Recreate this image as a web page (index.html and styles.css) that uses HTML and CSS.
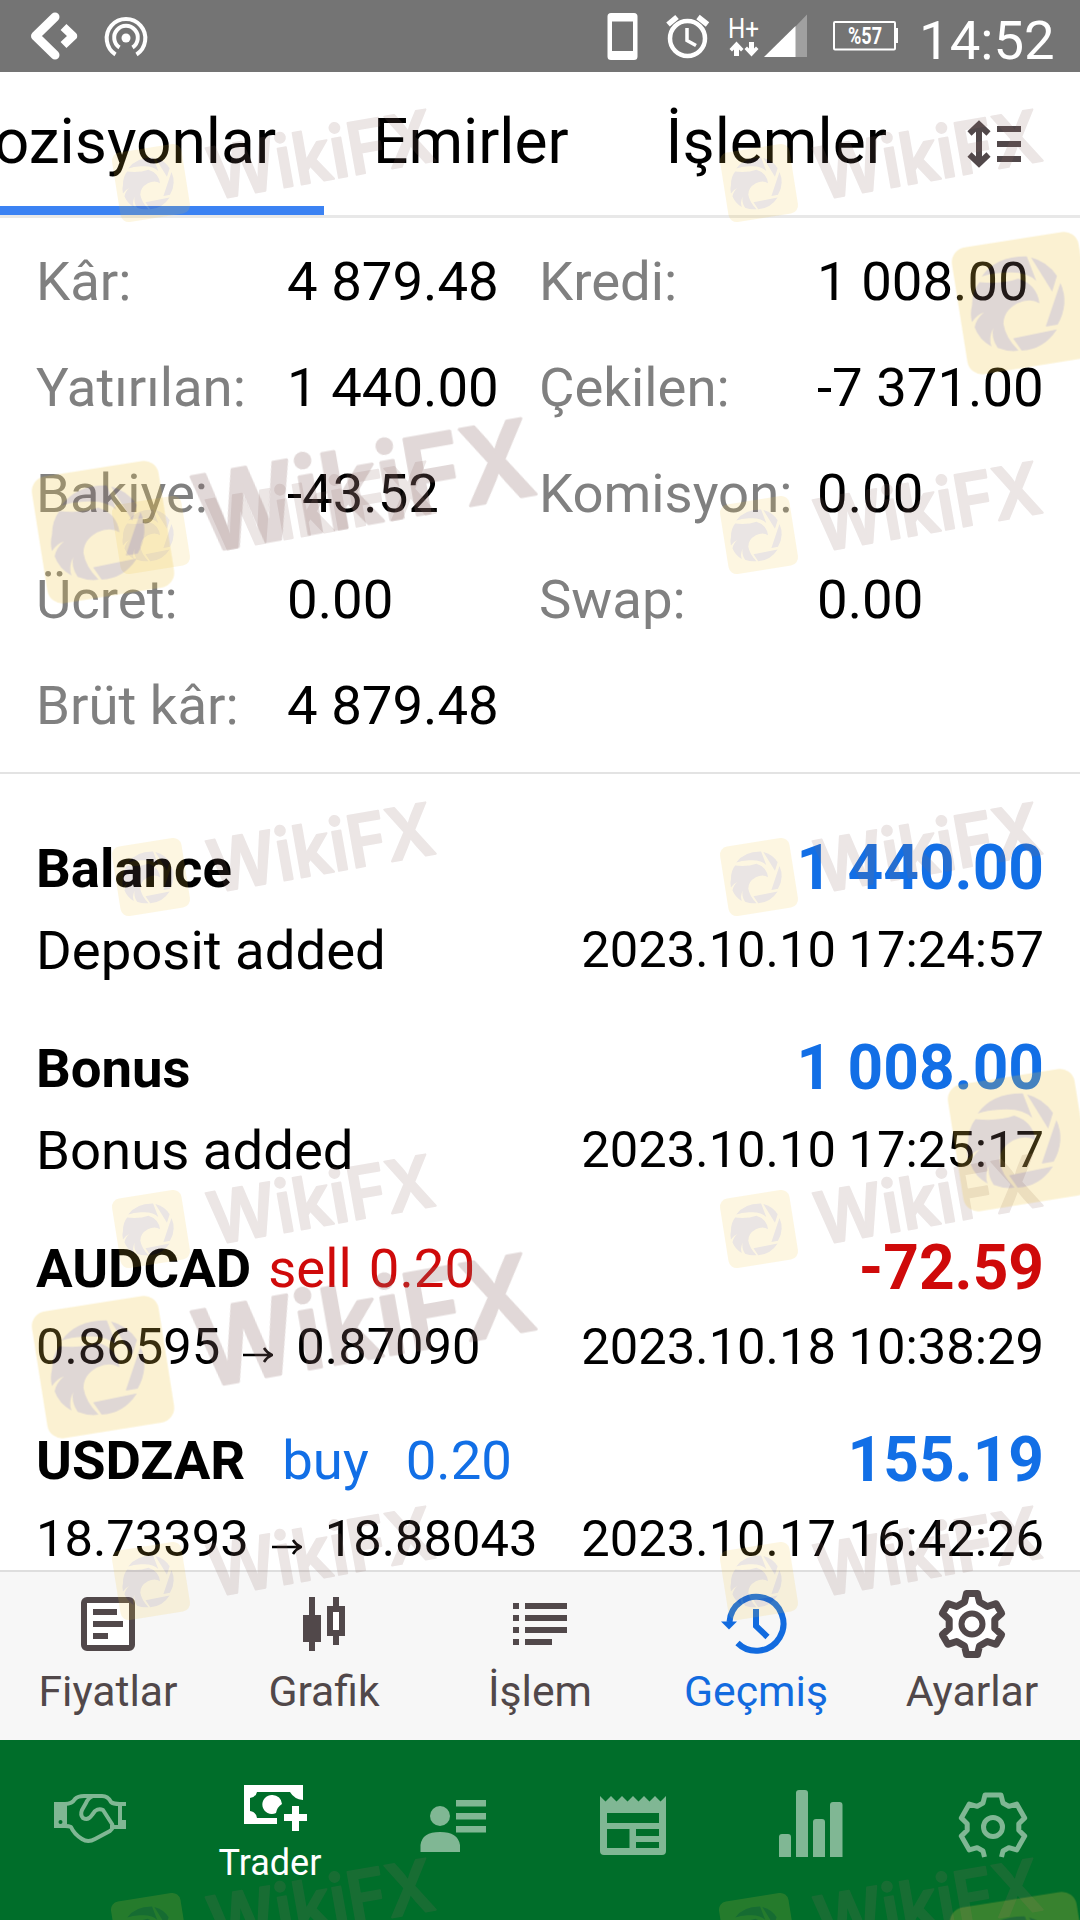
FILE: index.html
```html
<!DOCTYPE html>
<html lang="tr">
<head>
    <meta charset="UTF-8">
    <meta name="viewport" content="width=device-width, initial-scale=1.0">
    <title>Geçmiş</title>
    <link rel="stylesheet" href="styles.css">
</head>
<body>
<div class="screen">
    <header class="status-bar">
        <svg class="status-left" width="160" height="72" viewBox="0 0 160 72" fill="none" stroke="#fff">
            <path d="M55 17L35.500 36L55 55" stroke-width="9" stroke-linecap="round" stroke-linejoin="round"/>
            <path d="M63.500 27L73 36L63.500 45" stroke-width="8.500" stroke-linejoin="round"/>
            <path d="M115.500 54.500A19.300 19.300 0 1 1 136.500 54.500" stroke-width="4"/>
            <path d="M119.500 47.500A11.800 11.800 0 1 1 132.500 47.500" stroke-width="4"/>
            <circle cx="126" cy="38" r="4.500" fill="#fff" stroke="none"/>
        </svg>
        <div class="status-right">
            <svg width="220" height="72" viewBox="0 0 220 72">
                <path fill="#fff" fill-rule="evenodd" d="M11 13H34Q37.500 13 37.500 16.500V56.500Q37.500 60 34 60H11Q7.500 60 7.500 56.500V16.500Q7.500 13 11 13ZM12 21.500V51H33V21.500Z"/>
                <g fill="none" stroke="#fff">
                    <circle cx="87.500" cy="38.500" r="17.500" stroke-width="4.500"/>
                    <path d="M87 28V40.500L96 45.500" stroke-width="3.500"/>
                    <path d="M68 24.500L77 17M98 17L107.500 24.500" stroke-width="5.500"/>
                </g>
                <text x="128" y="38" class="net" textLength="31" lengthAdjust="spacingAndGlyphs">H+</text>
                <path fill="#fff" d="M136.500 41.500L143.500 49L141 51.500L139 49.500V56H134V49.500L132 51.500L129.500 49ZM151.500 56.500L144.500 49L147 46.500L149 48.500V42H154V48.500L156 46.500L158.500 49Z"/>
                <path fill="#a0a0a0" d="M195 27L207 14.500V57H195Z"/>
                <path fill="#fff" d="M164 57L195.500 26V57Z"/>
            </svg>
            <svg class="battery" width="68" height="32" viewBox="0 0 68 32">
                <rect x="2" y="2" width="61" height="27.500" rx="1" fill="none" stroke="#fff" stroke-width="2"/>
                <rect x="63" y="8" width="3" height="15" fill="#fff"/>
                <text x="16" y="24" class="percent" textLength="34" lengthAdjust="spacingAndGlyphs">%57</text>
            </svg>
            <span class="clock">14:52</span>
        </div>
    </header>

    <nav class="tabs">
        <a class="tab active">Pozisyonlar</a>
        <a class="tab">Emirler</a>
        <a class="tab">İşlemler</a>
        <svg class="sort" width="56" height="50" viewBox="0 0 56 50" stroke="#51484a" stroke-width="6" fill="none">
            <path d="M12 4V44M2.500 13.500L12 4.500L21.500 13.500M2.500 34.500L12 43.500L21.500 34.500"/>
            <path d="M30 9H54M30 24H54M30 39H54"/>
        </svg>
    </nav>

    <section class="summary">
        <span class="name">Kâr:</span><span>4 879.48</span><span class="name">Kredi:</span><span>1 008.00</span>
        <span class="name">Yatırılan:</span><span>1 440.00</span><span class="name">Çekilen:</span><span>-7 371.00</span>
        <span class="name">Bakiye:</span><span>-43.52</span><span class="name">Komisyon:</span><span>0.00</span>
        <span class="name">Ücret:</span><span>0.00</span><span class="name">Swap:</span><span>0.00</span>
        <span class="name">Brüt kâr:</span><span>4 879.48</span>
    </section>

    <main class="deals">
        <div class="deal">
            <div class="line"><b>Balance</b><b class="amount plus">1 440.00</b></div>
            <div class="line"><span>Deposit added</span><span class="date">2023.10.10 17:24:57</span></div>
        </div>
        <div class="deal">
            <div class="line"><b>Bonus</b><b class="amount plus">1 008.00</b></div>
            <div class="line"><span>Bonus added</span><span class="date">2023.10.10 17:25:17</span></div>
        </div>
        <div class="deal trade">
            <div class="line">
                <span class="symbol"><b>AUDCAD</b><span class="minus">sell</span><span class="minus">0.20</span></span>
                <b class="amount minus">-72.59</b>
            </div>
            <div class="line prices">
                <span class="route">0.86595
                    <svg width="30" height="16" viewBox="0 0 30 16"><path d="M0 8H28M21 1Q24 6 29 8Q24 10 21 15" fill="none" stroke="#000" stroke-width="2.500"/></svg>
                    0.87090</span>
                <span class="date">2023.10.18 10:38:29</span>
            </div>
        </div>
        <div class="deal trade">
            <div class="line">
                <span class="symbol wide"><b>USDZAR</b><span class="plus">buy</span><span class="plus">0.20</span></span>
                <b class="amount plus">155.19</b>
            </div>
            <div class="line prices">
                <span class="route">18.73393
                    <svg width="30" height="16" viewBox="0 0 30 16"><path d="M0 8H28M21 1Q24 6 29 8Q24 10 21 15" fill="none" stroke="#000" stroke-width="2.500"/></svg>
                    18.88043</span>
                <span class="date">2023.10.17 16:42:26</span>
            </div>
        </div>
    </main>

    <nav class="bottom-nav">
        <a class="item">
            <svg width="72" height="72" viewBox="0 0 72 72">
                <rect x="12" y="12" width="48" height="48" rx="3" fill="#fff" stroke="#51484a" stroke-width="6"/>
                <path d="M21 24H45M21 36H51M21 48H36" stroke="#51484a" stroke-width="6"/>
            </svg>
            <span>Fiyatlar</span>
        </a>
        <a class="item">
            <svg width="72" height="72" viewBox="0 0 72 72">
                <path d="M24 9V63M48 9V57" stroke="#51484a" stroke-width="6"/>
                <rect x="15" y="27" width="18" height="27" fill="#51484a"/>
                <rect x="42" y="21" width="12" height="24" fill="#fff" stroke="#51484a" stroke-width="6"/>
            </svg>
            <span lang="en">Grafik</span>
        </a>
        <a class="item">
            <svg width="72" height="72" viewBox="0 0 72 72" stroke="#51484a" stroke-width="6">
                <path d="M9 18H15M21 18H63M9 30H15M21 30H63M9 42H15M21 42H63M9 54H15M21 54H48"/>
            </svg>
            <span>İşlem</span>
        </a>
        <a class="item current">
            <svg width="72" height="72" viewBox="0 0 72 72">
                <path d="M9.500 34A27 27 0 1 1 17.500 55" fill="none" stroke="#126bdf" stroke-width="6"/>
                <path d="M1 33.500H17L9 41.500Z" fill="#126bdf"/>
                <path d="M36 21V38L47.500 49" fill="none" stroke="#126bdf" stroke-width="6"/>
            </svg>
            <span>Geçmiş</span>
        </a>
        <a class="item">
            <svg width="72" height="72" viewBox="-36 -36 72 72" fill="#fff" stroke="#51484a" stroke-width="7" stroke-linejoin="round">
                <path d="M-7.500-22L-5.500-30.500H5.500L7.500-22L15.300-17.500L24.100-20.300L29.600-10.700L22.800-4.500V4.500L29.600 10.700L24.100 20.300L15.300 17.500L7.500 22L5.500 30.500H-5.500L-7.500 22L-15.300 17.500L-24.100 20.300L-29.600 10.700L-22.800 4.500V-4.500L-29.600-10.700L-24.100-20.300L-15.300-17.500Z"/>
                <circle r="10.500" stroke-width="6"/>
            </svg>
            <span>Ayarlar</span>
        </a>
    </nav>

    <footer class="app-nav">
        <a class="app-item">
            <svg width="80" height="80" viewBox="0 0 80 80" fill="none" stroke="#80b794" stroke-width="4" stroke-linejoin="round">
                <path d="M4 18H17V44H4ZM10.500 36A2 2 0 1 0 10.500 40A2 2 0 1 0 10.500 36Z" fill="#80b794" fill-rule="evenodd" stroke="none"/>
                <path d="M76 20H70V43H76M74 36V43"/>
                <path d="M15 20Q22 20 25 15Q28 12 34 12H52Q58 12 61 18Q63 20 70 20"/>
                <path d="M43 12Q38 14 36 19L32 26Q30 31 33 34Q38 37 42 31L45 27Q49 24 53 26L62 40Q64 44 60 47L45 55Q38 59 32 55Q24 50 21 43Q19 42 15 42M60 43H70"/>
            </svg>
        </a>
        <a class="app-item on">
            <svg width="80" height="46" viewBox="0 0 80 46">
                <path fill="#fff" fill-rule="evenodd" d="M14 1H73V16Q64 15 60 8H27Q26 13 20 14V27Q26 28 27 34H47V40H14Z"/>
                <path fill="#fff" d="M42.500 11A9.500 9.500 0 0 1 52 20Q47 23 46 29A9.500 9.500 0 1 1 42.500 11Z"/>
                <path d="M65.500 22V47M54 33.500H77" stroke="#fff" stroke-width="7"/>
            </svg>
            <span>Trader</span>
        </a>
        <a class="app-item">
            <svg width="80" height="80" viewBox="0 0 80 80" fill="#80b794">
                <circle cx="30" cy="32" r="10"/>
                <path d="M10.500 68V61Q12 48 30 48Q48 48 50 61V68ZM46 16H76V22.500H46ZM46 29H76V35.500H46ZM46 42H76V48.500H46Z"/>
            </svg>
        </a>
        <a class="app-item">
            <svg width="80" height="80" viewBox="0 0 80 80" fill="#80b794">
                <path fill-rule="evenodd" d="M10 12L15.500 17.500L21 12L26.500 17.500L32 12L37.500 17.500L43 12L48.500 17.500L54 12L59.500 17.500L65 12L70.500 17.500L76 12V67Q76 71 72 71H14Q10 71 10 67ZM17 29V39H69V29ZM17 45V64H39.500V45ZM46 45V52H69V45ZM46 58V64H69V58Z"/>
            </svg>
        </a>
        <a class="app-item">
            <svg width="80" height="80" viewBox="0 0 80 80" fill="#80b794">
                <path d="M9 73V53Q9 50 12 50H18Q21 50 21 53V73ZM26 73V9Q26 6 29 6H35Q38 6 38 9V73ZM43 73V38Q43 35 46 35H52Q55 35 55 38V73ZM60 73V21Q60 18 63 18H69.500Q72.500 18 72.500 21V73Z"/>
            </svg>
        </a>
        <a class="app-item">
            <svg width="80" height="80" viewBox="-43 -43 80 80" fill="none" stroke="#80b794" stroke-width="5" stroke-linejoin="round">
                <path d="M-8.500 30L-10 24L-15.800 20.700L-23.700 22.900L-31.700 9.100L-25.800 3.300V-3.300L-31.700-9.100L-23.700-22.900L-15.800-20.700L-10-24L-8-32H8L10-24L15.800-20.700L23.700-22.900L31.700-9.100L25.800-3.300V3.300L31.700 9.100L23.700 22.900L15.800 20.700L10 24L8.500 30"/>
                <circle r="9.500"/>
            </svg>
        </a>
    </footer>

    <!-- Marca de agua repetida -->
    <svg class="watermarks" width="1080" height="1920" viewBox="0 0 1080 1920">
        <defs>
            <g id="badge">
                <rect x="-187" y="-187" width="374" height="374" rx="44" transform="rotate(-9)" fill="#efc640" fill-opacity=".9"/>
                <g transform="translate(-279 -249)" fill="#84655f">
                    <path d="M158 172Q200 112 290 113L318 185Q290 155 225 160Q185 162 158 172Z"/>
                    <path d="M302 116Q350 128 378 170L364 216Z"/>
                    <path d="M388 190Q415 250 380 312L345 318Z"/>
                    <path d="M378 326Q340 385 275 388L250 352Z"/>
                    <path d="M130 258Q130 215 152 188Q220 195 265 178Q320 195 327 250Q300 232 262 250Q222 272 222 310Q228 350 266 388Q235 392 205 380Q185 350 192 322Q178 350 187 376Q150 355 138 320Q142 295 165 276Q145 282 130 305Q124 280 130 258Z"/>
                </g>
            </g>
        </defs>
        <g class="mark small">
            <use href="#badge" transform="translate(151 183) scale(.188)"/>
            <text transform="translate(213 200) rotate(-10)" textLength="228" lengthAdjust="spacingAndGlyphs">WikiFX</text>
            <use href="#badge" transform="translate(759 183) scale(.188)"/>
            <text transform="translate(820 200) rotate(-10)" textLength="228" lengthAdjust="spacingAndGlyphs">WikiFX</text>
            <use href="#badge" transform="translate(151 535) scale(.188)"/>
            <text transform="translate(213 552) rotate(-10)" textLength="228" lengthAdjust="spacingAndGlyphs">WikiFX</text>
            <use href="#badge" transform="translate(759 535) scale(.188)"/>
            <text transform="translate(820 552) rotate(-10)" textLength="228" lengthAdjust="spacingAndGlyphs">WikiFX</text>
            <use href="#badge" transform="translate(151 877) scale(.188)"/>
            <text transform="translate(213 893) rotate(-10)" textLength="228" lengthAdjust="spacingAndGlyphs">WikiFX</text>
            <use href="#badge" transform="translate(759 877) scale(.188)"/>
            <text transform="translate(820 893) rotate(-10)" textLength="228" lengthAdjust="spacingAndGlyphs">WikiFX</text>
            <use href="#badge" transform="translate(151 1229) scale(.188)"/>
            <text transform="translate(213 1245) rotate(-10)" textLength="228" lengthAdjust="spacingAndGlyphs">WikiFX</text>
            <use href="#badge" transform="translate(759 1229) scale(.188)"/>
            <text transform="translate(820 1245) rotate(-10)" textLength="228" lengthAdjust="spacingAndGlyphs">WikiFX</text>
            <use href="#badge" transform="translate(151 1581) scale(.188)"/>
            <text transform="translate(213 1597) rotate(-10)" textLength="228" lengthAdjust="spacingAndGlyphs">WikiFX</text>
            <use href="#badge" transform="translate(759 1581) scale(.188)"/>
            <text transform="translate(820 1597) rotate(-10)" textLength="228" lengthAdjust="spacingAndGlyphs">WikiFX</text>
            <use href="#badge" transform="translate(150 1932) scale(.188)"/>
            <text transform="translate(213 1949) rotate(-10)" textLength="228" lengthAdjust="spacingAndGlyphs">WikiFX</text>
            <use href="#badge" transform="translate(758 1932) scale(.188)"/>
            <text transform="translate(820 1949) rotate(-10)" textLength="228" lengthAdjust="spacingAndGlyphs">WikiFX</text>
        </g>
        <g class="mark big">
            <use href="#badge" transform="translate(103 532) scale(.343)"/>
            <text transform="translate(202 553) rotate(-10)" textLength="342" lengthAdjust="spacingAndGlyphs">WikiFX</text>
            <use href="#badge" transform="translate(103 1367) scale(.343)"/>
            <text transform="translate(202 1388) rotate(-10)" textLength="342" lengthAdjust="spacingAndGlyphs">WikiFX</text>
            <use href="#badge" transform="translate(1023 303) scale(.343)"/>
            <use href="#badge" transform="translate(1019 1140) scale(.343)"/>
            <use href="#badge" transform="translate(1021 1963) scale(.343)"/>
        </g>
    </svg>
</div>
</body>
</html>
```

FILE: styles.css
```css
body {
    margin: 0;
    font-family: Roboto, sans-serif;
    background-color: #ffffff;
    color: #000000;
}

.screen {
    position: relative;
    display: flex;
    flex-direction: column;
    width: 1080px;
    height: 1920px;
    overflow: hidden;
    font-size: 54.5px;
    white-space: nowrap;
}

svg {
    display: block;
    flex: none;
}

/* Barra de estado */
.status-bar {
    display: flex;
    justify-content: space-between;
    height: 72px;
    background-color: #747474;
    color: #ffffff;
}

.status-right {
    display: flex;
    align-items: center;
    width: 480px;
}

.battery {
    margin-left: 12px;
}

.net {
    font-size: 28px;
    fill: #ffffff;
}

.percent {
    font-size: 23px;
    font-weight: bold;
    fill: #ffffff;
}

.clock {
    margin-left: 19px;
    padding-top: 7px;
}

/* Pestañas */
.tabs {
    display: flex;
    height: 143px;
    border-bottom: 3px solid #e8e8e8;
}

.tab {
    box-sizing: border-box;
    flex: none;
    padding: 0 48px 0 49px;
    font-size: 62.3px;
    line-height: 139px;
    border-bottom: 9px solid transparent;
}

.tab:first-child {
    display: flex;
    justify-content: flex-end;
    width: 324px;
}

.tab.active {
    border-bottom-color: #3b82f3;
}

.sort {
    margin: 48px 0 0 32px;
}

/* Resumen de la cuenta */
.summary {
    display: grid;
    grid-template-columns: 251px 252px 278px auto;
    padding: 10px 0 14px 36px;
    line-height: 106px;
    border-bottom: 2px solid #e3e3e3;
}

.name {
    color: #808080;
}

/* Lista de operaciones */
.deals {
    flex: 1;
    min-height: 0;
    overflow: hidden;
    padding: 35px 36px 0;
}

.deal {
    padding: 18px 0;
}

.line {
    display: flex;
    justify-content: space-between;
    align-items: center;
    height: 82px;
    line-height: 82px;
}

.line.prices {
    height: 74px;
    padding-top: 1px;
    margin-bottom: -1px;
    font-size: 50.7px;
}

.amount {
    font-size: 62.2px;
}

.date {
    font-size: 50.7px;
}

.plus {
    color: #126fe6;
}

.minus {
    color: #cf0a0a;
}

.symbol {
    display: flex;
    gap: 17px;
}

.symbol.wide {
    gap: 37px;
}

.route {
    display: flex;
    align-items: center;
    gap: 23px;
}

.route svg {
    margin-top: 16px;
}

/* Menú inferior */
.bottom-nav {
    display: flex;
    height: 168px;
    border-top: 2px solid #dedede;
    background-color: #f7f7f7;
    font-size: 42.7px;
    color: #51484a;
}

.item {
    display: flex;
    flex-direction: column;
    align-items: center;
    width: 216px;
    padding-top: 16px;
}

.item span {
    margin-top: 4px;
    line-height: 54px;
}

.current {
    color: #126bdf;
}

.app-nav {
    display: flex;
    height: 180px;
    background-color: #006e2a;
    color: #ffffff;
    font-size: 36px;
}

.app-item {
    display: flex;
    flex-direction: column;
    align-items: center;
    width: 180px;
    padding-top: 44px;
}

.app-item span {
    margin-top: 13px;
    line-height: 40px;
}

.on svg {
    overflow: visible;
}

/* Marca de agua */
.watermarks {
    position: absolute;
    top: 0;
    left: 0;
    pointer-events: none;
}

.mark text {
    font-family: Inter, sans-serif;
    font-weight: 600;
    fill: #8c6a68;
    stroke: #8c6a68;
    stroke-width: 2px;
    stroke-linejoin: round;
}

.small {
    opacity: 0.17;
    font-size: 72px;
}

.big {
    opacity: 0.26;
    font-size: 106px;
}

.big text {
    stroke-width: 3px;
}
```
